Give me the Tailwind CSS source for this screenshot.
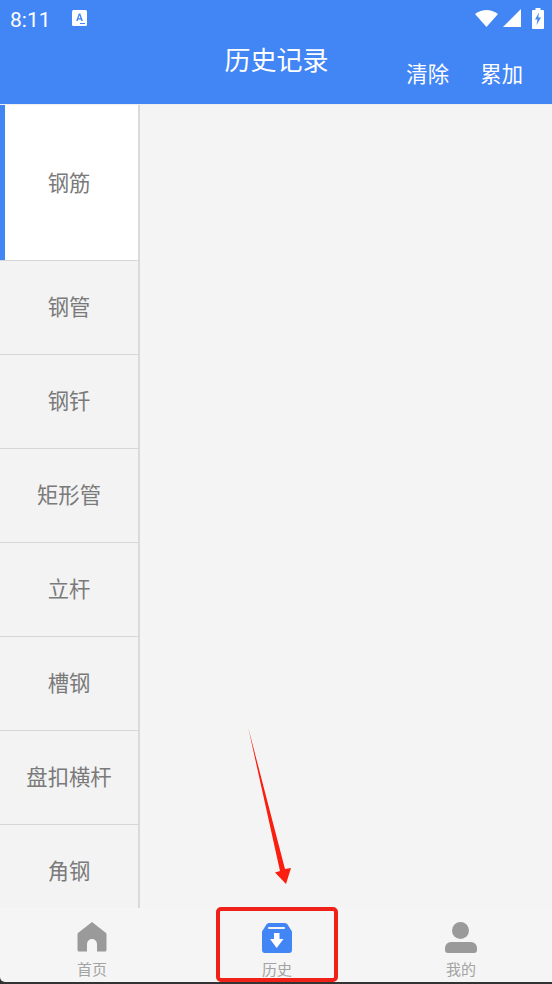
<!DOCTYPE html>
<html lang="zh">
<head>
<meta charset="utf-8">
<script src="https://cdn.jsdelivr.net/npm/@tailwindcss/browser@4"></script>
</head>
<body class="m-0 bg-[#333333]">
<div class="relative w-[552px] h-[984px] overflow-hidden flex flex-col bg-[#333333] font-['Roboto','Noto_Sans_CJK_SC',sans-serif]">
  <header class="h-[105px] shrink-0 bg-[#4285f4] text-white flex flex-col border-b border-[#eeeeee]">
    <div class="h-[36px] shrink-0 flex items-center pl-[10px] pr-[8px]">
      <span class="w-[40px] text-[21px] leading-none font-normal mt-[4px]">8:11</span>
      <svg class="ml-[22px] mt-[0px]" width="15" height="16" viewBox="0 0 15 16"><rect width="15" height="16" rx="1.500" fill="#fff"/><path d="M4.200 11 6.800 3.500h1.500L10.900 11H9.300l-.5-1.600H6.200L5.700 11zM6.600 8.200h1.800L7.500 5.300z" fill="#4285f4"/><path d="M8 13h5v1H8z" fill="#4285f4"/></svg>
      <div class="ml-auto flex items-center">
        <svg width="24" height="18" viewBox="0 0 24 18"><path d="M0 5Q11.500-3 23 5L11.500 18z" fill="#fff"/></svg>
        <svg class="ml-[4px]" width="18" height="18" viewBox="0 0 18 18"><path d="M0 18 18 0V18z" fill="#fff"/></svg>
        <svg class="ml-[11px]" width="12" height="21" viewBox="0 0 12 21"><path d="M3.500 0h5v2H11a1 1 0 0 1 1 1v17a1 1 0 0 1-1 1H1a1 1 0 0 1-1-1V3a1 1 0 0 1 1-1h2.500z" fill="#fff"/><path d="M7 4.500 3 11.500h2.500L4.500 17 9 9.500H6.300z" fill="#4285f4"/></svg>
      </div>
    </div>
    <div class="relative flex-1 flex">
      <h1 class="absolute left-[1px] right-0 top-[6px] text-center text-[26px] leading-[38px] font-normal">历史记录</h1>
      <div class="ml-auto mt-[20px] mr-[29px] flex gap-[31.300px] text-[21.330px] leading-[38px] font-normal">
        <span>清除</span><span>累加</span>
      </div>
    </div>
  </header>

  <main class="h-[803px] shrink-0 flex bg-[#f4f4f4]">
    <nav class="w-[140px] shrink-0 border-r-2 border-[#dadada] flex flex-col text-[21.330px] text-[#7a7a7a] overflow-hidden">
      <div class="h-[155px] shrink-0 bg-white border-l-[5px] border-[#4285f4] flex items-center justify-center pr-[5px] pt-[2px]">钢筋</div>
      <div class="h-[94px] shrink-0 border-t border-[#d6d6d6] bg-[#f3f3f3] flex items-center justify-center pt-[1px]">钢管</div>
      <div class="h-[94px] shrink-0 border-t border-[#d6d6d6] bg-[#f3f3f3] flex items-center justify-center pt-[1px]">钢钎</div>
      <div class="h-[94px] shrink-0 border-t border-[#d6d6d6] bg-[#f3f3f3] flex items-center justify-center pt-[1px]">矩形管</div>
      <div class="h-[94px] shrink-0 border-t border-[#d6d6d6] bg-[#f3f3f3] flex items-center justify-center">立杆</div>
      <div class="h-[94px] shrink-0 border-t border-[#d6d6d6] bg-[#f3f3f3] flex items-center justify-center">槽钢</div>
      <div class="h-[94px] shrink-0 border-t border-[#d6d6d6] bg-[#f3f3f3] flex items-center justify-center">盘扣横杆</div>
      <div class="h-[94px] shrink-0 border-t border-[#d6d6d6] bg-[#f3f3f3] flex items-center justify-center">角钢</div>
    </nav>
    <section class="flex-1 bg-[#f4f4f4]"></section>
  </main>

  <footer class="h-[74px] shrink-0 bg-[#f5f5f5] rounded-bl-[5px] flex text-[15px] text-[#a3a3a3]">
    <div class="w-[184px] flex flex-col items-center pt-[14px]">
      <svg width="30" height="30" viewBox="0 0 30 30"><path d="M15 0 29 11a2 2 0 0 1 .500 1.500V28a1.500 1.500 0 0 1-1.500 1.500H20V22a5 5 0 0 0-10 0v7.500H2A1.500 1.500 0 0 1 .5 28V12.500a2 2 0 0 1 .5-1.500z" fill="#9a9a9a"/></svg>
      <span class="leading-[20px] mt-[8px]">首页</span>
    </div>
    <div class="w-[186px] flex flex-col items-center pt-[15px]">
      <svg width="30" height="30" viewBox="0 0 30 30"><path d="M7 0h16a3 3 0 0 1 2.600 1.500L29 7a3 3 0 0 1 1 2.500V27a3 3 0 0 1-3 3H3a3 3 0 0 1-3-3V9.500A3 3 0 0 1 1 7l3.400-5.500A3 3 0 0 1 7 0z" fill="#4285f4"/><rect x="6" y="4" width="17" height="2" rx="1" fill="#f5f5f5"/><path d="M12 10h5.500v6h4L14.700 25 8 16h4z" fill="#fff"/></svg>
      <span class="leading-[20px] mt-[7px]">历史</span>
    </div>
    <div class="w-[182px] flex flex-col items-center pt-[14px]">
      <svg width="32" height="31" viewBox="0 0 32 31"><circle cx="15.500" cy="8.500" r="8.500" fill="#9a9a9a"/><path d="M6 20h20a6 6 0 0 1 6 6v2a3 3 0 0 1-3 3H3a3 3 0 0 1-3-3v-2a6 6 0 0 1 6-6z" fill="#9a9a9a"/></svg>
      <span class="leading-[20px] mt-[7px]">我的</span>
    </div>
  </footer>

  <div class="absolute left-[216px] top-[907px] w-[122px] h-[75px] border-4 border-[#ef2118] rounded-[5px]"></div>
  <svg class="absolute left-[230px] top-[720px]" width="80" height="170" viewBox="0 0 80 170"><path d="M18.300 8 55 149 61 148 56 164 45 152.500 50 151z" fill="#fb1d10"/></svg>
</div>
</body>
</html>
